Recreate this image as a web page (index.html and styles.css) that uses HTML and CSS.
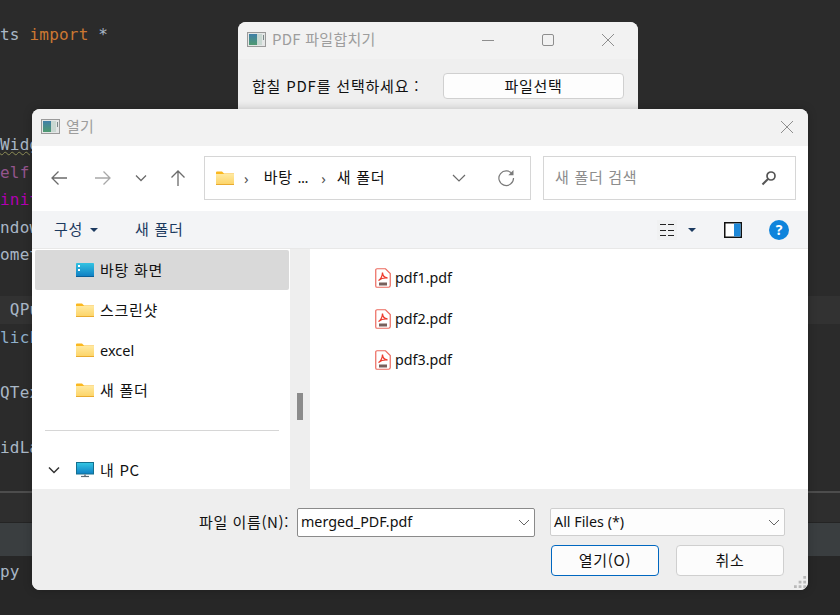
FILE: index.html
```html
<!DOCTYPE html>
<html lang="ko">
<head>
<meta charset="utf-8">
<title>열기</title>
<link rel="stylesheet" href="styles.css">
</head>
<body>
<div class="ide">
  <div class="code">
    <div class="ln">ts <span class="kw">import</span> *</div>
    <div class="ln"></div><div class="ln"></div><div class="ln"></div>
    <div class="ln"><span class="warn">Widget</span></div>
    <div class="ln"><span class="self">elf</span></div>
    <div class="ln"><span class="magic">init</span></div>
    <div class="ln">ndow</div>
    <div class="ln">omet</div>
    <div class="ln"></div>
    <div class="ln hl">&nbsp;QPu</div>
    <div class="ln"><span class="fn">lick</span></div>
    <div class="ln"></div>
    <div class="ln">QTex</div>
    <div class="ln"></div>
    <div class="ln">idLa</div>
  </div>
  <div class="panel">
    <div class="tab-strip"></div>
    <div class="tab-active"></div>
    <div class="ln py">py</div>
  </div>
</div>

<section class="win main-win">
  <header class="titlebar">
    <svg class="appicon" viewBox="0 0 19 15"><use href="#app"/></svg>
    <span class="title ko">PDF 파일합치기</span>
    <div class="caps">
      <svg viewBox="0 0 14 14" class="cap"><path d="M1 7.500h12" stroke="#8e8e8e" fill="none"/></svg>
      <svg viewBox="0 0 14 14" class="cap"><rect x="1.500" y="1.500" width="11" height="11" rx="1.500" stroke="#8e8e8e" fill="none"/></svg>
      <svg viewBox="0 0 14 14" class="cap"><path d="M1 1l12 12M13 1L1 13" stroke="#8e8e8e" fill="none"/></svg>
    </div>
  </header>
  <div class="pick-row">
    <span class="ko pick-label">합칠 PDF를 선택하세요 :</span>
    <button class="pick-btn ko">파일선택</button>
  </div>
</section>

<section class="win dialog">
  <header class="titlebar">
    <svg class="appicon" viewBox="0 0 19 15"><use href="#app"/></svg>
    <span class="title ko">열기</span>
    <svg viewBox="0 0 14 14" class="dlg-close"><path d="M1 1l12 12M13 1L1 13" stroke="#8e8e8e" fill="none"/></svg>
  </header>

  <nav class="navbar">
    <div class="navbtns">
      <svg viewBox="0 0 18 18" class="nb" ><path d="M17 9H2M8.500 2.500L2 9l6.500 6.500" stroke="#6b6b6b" stroke-width="1.300" fill="none"/></svg>
      <svg viewBox="0 0 18 18" class="nb"><path d="M1 9h15M9.500 2.500L16 9l-6.500 6.500" stroke="#a8a8a8" stroke-width="1.300" fill="none"/></svg>
      <svg viewBox="0 0 12 8" class="nb-small"><path d="M1 1.500l5 5 5-5" stroke="#6b6b6b" stroke-width="1.300" fill="none"/></svg>
      <svg viewBox="0 0 18 18" class="nb"><path d="M9 17V2M2.500 8.500L9 2l6.500 6.500" stroke="#6b6b6b" stroke-width="1.300" fill="none"/></svg>
    </div>
    <div class="address">
      <svg class="fold" viewBox="0 0 18 14"><use href="#folder"/></svg>
      <span class="sep">›</span>
      <span class="ko crumb">바탕 <span class="dots">...</span></span>
      <span class="sep">›</span>
      <span class="ko crumb">새 폴더</span>
      <span class="spacer"></span>
      <svg viewBox="0 0 14 8" class="addr-chev"><path d="M1 1l6 6 6-6" stroke="#6b6b6b" stroke-width="1.200" fill="none"/></svg>
      <svg viewBox="0 0 18 18" class="refresh"><path d="M15.500 5.500A7.300 7.300 0 1 0 16.500 9" stroke="#7a7a7a" stroke-width="1.200" fill="none"/><path d="M16.500 1v5.200h-5.200z" fill="#7a7a7a"/></svg>
    </div>
    <div class="search">
      <span class="ko search-text">새 폴더 검색</span>
      <svg viewBox="0 0 16 16" class="mag"><circle cx="10" cy="6" r="4" stroke="#555" stroke-width="1.700" fill="none"/><path d="M7 9l-5.500 5.500" stroke="#555" stroke-width="2" fill="none"/></svg>
    </div>
  </nav>

  <div class="toolbar">
    <span class="ko tool org">구성</span>
    <span class="tri"></span>
    <span class="ko tool newf">새 폴더</span>
    <span class="spacer"></span>
    <svg viewBox="0 0 20 20" class="view"><rect width="20" height="20" fill="#f0f1f2"/><path d="M3 4.500h6M11 4.500h6M3 10.500h6M11 10.500h6M3 15.500h6M11 15.500h6" stroke="#222" stroke-width="1"/></svg>
    <span class="tri viewtri"></span>
    <svg viewBox="0 0 18 16" class="pane"><rect x=".75" y=".75" width="16.500" height="14.500" fill="#fff" stroke="#111" stroke-width="1.500"/><rect x="10" y="1.500" width="6.500" height="13" fill="#1e88d8"/></svg>
    <span class="help">?</span>
  </div>

  <div class="content">
    <aside class="side">
      <div class="row sel"><svg class="ic" viewBox="0 0 18 14"><use href="#desk"/></svg><span class="ko">바탕 화면</span></div>
      <div class="row"><svg class="ic" viewBox="0 0 18 14"><use href="#folder"/></svg><span class="ko">스크린샷</span></div>
      <div class="row"><svg class="ic" viewBox="0 0 18 14"><use href="#folder"/></svg><span class="lat">excel</span></div>
      <div class="row"><svg class="ic" viewBox="0 0 18 14"><use href="#folder"/></svg><span class="ko">새 폴더</span></div>
      <div class="divider"></div>
      <div class="row pc">
        <svg class="pc-chev" viewBox="0 0 12 8"><path d="M1 1.500l5 5 5-5" stroke="#333" stroke-width="1.500" fill="none"/></svg>
        <svg class="ic tall" viewBox="0 0 18 16"><defs><linearGradient id="m" x1="0" y1="0" x2="0" y2="1"><stop offset="0" stop-color="#35c8e4"/><stop offset="1" stop-color="#0f7fc4"/></linearGradient></defs><rect x=".5" y=".5" width="17" height="11.500" fill="url(#m)" stroke="#14708f"/><path d="M8 12h2v2H8z" fill="#8a9aa5"/><path d="M5 14.500h8" stroke="#5d6b75" stroke-width="1.200"/></svg>
        <span class="ko">내 PC</span>
      </div>
    </aside>
    <div class="scroll"><div class="thumb"></div></div>
    <div class="files">
      <div class="file"><svg class="pdf" viewBox="0 0 16 20"><use href="#pdf"/></svg><span class="lat">pdf1.pdf</span></div>
      <div class="file"><svg class="pdf" viewBox="0 0 16 20"><use href="#pdf"/></svg><span class="lat">pdf2.pdf</span></div>
      <div class="file"><svg class="pdf" viewBox="0 0 16 20"><use href="#pdf"/></svg><span class="lat">pdf3.pdf</span></div>
    </div>
  </div>

  <footer class="foot">
    <div class="foot-row">
      <span class="ko foot-label">파일 이름(N):</span>
      <div class="combo name"><span class="lat up">merged_PDF.pdf</span><svg viewBox="0 0 12 7" class="cchev"><path d="M1 1l5 5 5-5" stroke="#666" fill="none"/></svg></div>
      <div class="combo filter"><span class="lat up">All Files (*)</span><svg viewBox="0 0 12 7" class="cchev"><path d="M1 1l5 5 5-5" stroke="#666" fill="none"/></svg></div>
    </div>
    <div class="foot-row actions">
      <button class="btn primary ko">열기(O)</button>
      <button class="btn ko">취소</button>
    </div>
    <svg class="grip" viewBox="0 0 14 14"><path d="M10 0h3v3h-3zM5 5h3v3H5zM10 5h3v3h-3zM0 10h3v3H0zM5 10h3v3H5zM10 10h3v3h-3z" fill="#b9b9b9"/></svg>
  </footer>
</section>

<svg class="defs" aria-hidden="true">
  <defs>
    <linearGradient id="tl" x1="0" y1="0" x2="0" y2="1"><stop offset="0" stop-color="#3f7fa8"/><stop offset="1" stop-color="#4f9a70"/></linearGradient>
    <linearGradient id="ff" x1="0" y1="0" x2="0" y2="1"><stop offset="0" stop-color="#ffe9a0"/><stop offset="1" stop-color="#fdd467"/></linearGradient>
    <linearGradient id="dk" x1="0" y1="0" x2="0" y2="1"><stop offset="0" stop-color="#33c3e2"/><stop offset="1" stop-color="#0e7cc2"/></linearGradient>
    <symbol id="app" viewBox="0 0 19 15">
      <rect x=".5" y=".5" width="18" height="14" fill="#e4e6e6" stroke="#9a9a9a"/>
      <rect x="2" y="2" width="8" height="11" fill="url(#tl)"/>
      <rect x="10" y="2" width="5" height="11" fill="#c9d8d2"/>
      <rect x="16" y="3" width="1" height="5" fill="#7a8a88"/>
    </symbol>
    <symbol id="folder" viewBox="0 0 18 14">
      <path d="M0 1.500Q0 .5 1 .5h5l2 2h10V14H0z" fill="#fbb81f"/>
      <rect y="3" width="18" height="10.500" fill="url(#ff)"/>
      <rect y="13" width="18" height="1" fill="#e9ab30"/>
    </symbol>
    <symbol id="desk" viewBox="0 0 18 14">
      <rect y="0" width="18" height="14" rx=".8" fill="url(#dk)"/>
      <rect x="2" y="2" width="2" height="2" fill="#fff"/><rect x="2" y="6" width="2" height="2" fill="#fff"/>
      <rect y="13" width="18" height="1" fill="#0a5f98"/>
    </symbol>
    <symbol id="pdf" viewBox="0 0 16 20">
      <path d="M2 .75h8.500l4.750 4.750V17.500a1.750 1.750 0 0 1-1.750 1.750H2A1.250 1.250 0 0 1 .75 18V2A1.250 1.250 0 0 1 2 .75z" fill="#fff" stroke="#ec6a5e" stroke-width="1.200"/>
      <path d="M3.500 12.500c2-1 4-4.500 4-8 0 3 2 5 5 5.500-3-.3-6.500.5-9 2.500z" fill="none" stroke="#ee3d2f" stroke-width="1.300"/>
      <rect x="4" y="14.500" width="8" height="3" fill="#77605c"/>
    </symbol>
  </defs>
</svg>
</body>
</html>
```
FILE: styles.css
```css
html, body { margin: 0; padding: 0; }
body {
  width: 840px;
  height: 615px;
  overflow: hidden;
  background: #2b2b2b;
  position: relative;
  font-family: "Noto Sans", "Noto Sans CJK KR", sans-serif;
  font-size: 15px;
  color: #111;
}
.defs { width: 0; height: 0; display: block; }

.ide { height: 615px; display: flex; flex-direction: column; }
.code {
  height: 491px;
  padding-top: 21px;
  box-sizing: border-box;
  overflow: hidden;
}
.ln {
  height: 27.500px;
  line-height: 27.500px;
  font-family: "DejaVu Sans Mono", monospace;
  font-size: 16px;
  letter-spacing: .2px;
  color: #a9b7c6;
  white-space: pre;
}
.kw { color: #cc7832; }
.warn { color: #a9b7c6; text-decoration: underline wavy #8d8d55 1px; }
.self { color: #94558d; }
.magic { color: #b200b2; }
.fn { color: #8fb0cc; }
.hl { background: #323232; }

.panel { flex: 1; border-top: 2px solid #4d4d4d; display: flex; flex-direction: column; background: #272727; }
.tab-strip { height: 29px; background: #2e2e2e; border-bottom: 1px solid #242424; }
.tab-active { height: 33px; background: #3a3e40; }
.py { padding-top: 2px; }

.win { position: absolute; background: #efefef; box-sizing: border-box; overflow: hidden; }
.main-win {
  left: 238px; top: 22px; width: 400px; height: 120px;
  border-radius: 8px 8px 0 0;
}
.dialog {
  left: 32px; top: 109px; width: 776px; height: 481px;
  border-radius: 8px;
  display: flex; flex-direction: column;
  box-shadow: 0 0 10px rgba(0,0,0,.22);
}
.titlebar {
  height: 37px;
  flex: none;
  background: #f2f2f2;
  display: flex;
  align-items: center;
  padding: 0 0 2px 9px;
  box-sizing: border-box;
}
.appicon { width: 19px; height: 15px; margin-right: 6px; }
.ko { font-family: "Noto Sans CJK KR", "Noto Sans", sans-serif; font-size: 15px; letter-spacing: .7px; padding-bottom: 2px; }
.title { color: #9d9d9d; letter-spacing: .25px; }
.caps { margin-left: auto; display: flex; gap: 46px; padding-right: 23px; }
.cap { width: 14px; height: 14px; display: block; }
.dlg-close { width: 14px; height: 14px; margin-left: auto; margin-right: 14px; }
.lat { font-family: "Noto Sans", sans-serif; }
.up { padding-bottom: 2px; }
.dots { font-family: "Noto Sans", sans-serif; letter-spacing: -.5px; }

.pick-row { display: flex; align-items: center; height: 34px; margin-top: 10px; padding: 0 14px; background: #efefef; }
.pick-label { color: #111; letter-spacing: .8px; }
.pick-btn {
  margin-left: auto; width: 181px; height: 26px; padding: 0 0 2px;
  background: #fdfdfd; border: 1px solid #d0d0d0; border-radius: 4px;
  color: #111;
}

.navbar { height: 65px; flex: none; background: #fff; display: flex; align-items: center; padding-bottom: 2px; box-sizing: border-box; }
.navbtns { display: flex; align-items: center; width: 172px; padding-left: 18px; box-sizing: border-box; }
.nb { width: 18px; height: 18px; display: block; }
.navbtns .nb:nth-child(2) { margin-left: 26px; }
.nb-small { width: 12px; height: 8px; margin-left: 23px; }
.navbtns .nb:nth-child(4) { margin-left: 22px; }
.address {
  width: 327px; height: 44px; box-sizing: border-box;
  border: 1px solid #d6d6d6; display: flex; align-items: center;
  padding: 0 15px 0 11px;
}
.fold { width: 18px; height: 14px; }
.sep { margin: 0 15px 0 10px; color: #555; font-size: 15px; }
.crumb { color: #111; }
.crumb + .sep { margin: 0 11px 0 13px; }
.spacer { flex: 1; }
.addr-chev { width: 14px; height: 8px; margin-right: 31px; }
.refresh { width: 18px; height: 18px; }
.search {
  width: 253px; height: 44px; margin-left: 12px; box-sizing: border-box;
  border: 1px solid #d6d6d6; display: flex; align-items: center;
  padding: 0 18px 0 11px; justify-content: space-between;
}
.search-text { color: #8d8d8d; }
.mag { width: 16px; height: 16px; }

.toolbar { height: 38px; flex: none; background: #f3f4f6; border-bottom: 1px solid #e8e8e8; display: flex; align-items: center; box-sizing: border-box; padding-right: 19px; }
.tool { color: #1c3a60; }
.org { margin-left: 22px; }
.tri { width: 0; height: 0; border-left: 4px solid transparent; border-right: 4px solid transparent; border-top: 4px solid #1c3a60; margin-left: 7px; }
.newf { margin-left: 37px; }
.view { width: 20px; height: 20px; }
.viewtri { margin-left: 11px; margin-right: 28px; }
.pane { width: 18px; height: 16px; margin-right: 27px; }
.help {
  width: 20px; height: 20px; border-radius: 50%; background: #0f84dc;
  color: #fff; font: bold 14px/20px "Noto Sans", sans-serif; text-align: center;
}

.content { height: 240px; flex: none; display: flex; background: #fff; }
.side { width: 258px; flex: none; overflow: hidden; box-sizing: border-box; padding: 1px 1px 0 3px; }
.row { height: 40px; display: flex; align-items: center; padding-left: 41px; font-size: 14.500px; }
.sel { background: #d9d9d9; border-radius: 2px; }
.ic { width: 18px; height: 14px; margin-right: 6px; flex: none; }
.ic.tall { height: 16px; margin-right: 6px; }
.divider { height: 1px; background: #d6d6d6; margin: 20px 10px 19px 10px; }
.pc { padding-left: 13px; }
.pc-chev { width: 12px; height: 8px; margin-right: 16px; }
.scroll { width: 20px; flex: none; background: #eeeeee; position: relative; padding-top: 144px; box-sizing: border-box; }
.thumb { width: 6px; height: 27px; background: #8c8c8c; margin-left: 7px; }
.files { flex: 1; padding: 8px 0 0 63px; border-left: 2px solid #fff; }
.file { height: 41px; display: flex; align-items: center; font-size: 14.300px; }
.pdf { width: 16px; height: 20px; margin-right: 4px; }

.foot { flex: 1; background: #eeeeee; position: relative; padding-top: 19px; box-sizing: border-box; }
.foot-row { display: flex; align-items: center; }
.foot-label { margin-left: 166px; width: 91px; margin-right: 8px; white-space: nowrap; letter-spacing: .6px; text-align: right; }
.combo {
  height: 29px; box-sizing: border-box; background: #fff; display: flex; align-items: center;
  justify-content: space-between; padding: 0 4px 0 3px; border-radius: 2px; font-size: 14.300px;
}
.name { width: 238px; border: 1px solid #8a8a8a; }
.filter { width: 235px; margin-left: 15px; height: 28px; align-self: flex-start; border: 1px solid #cecece; background: #fdfdfd; }
.cchev { width: 12px; height: 7px; }
.actions { margin-top: 8px; justify-content: flex-end; gap: 17px; padding-right: 24px; }
.btn {
  width: 108px; height: 31px; padding: 0 0 2px; background: #fcfcfc;
  border: 1px solid #cfcfcf; border-radius: 4px; color: #111;
}
.primary { border-color: #0067c0; }
.grip { position: absolute; right: 1px; bottom: 1px; width: 13px; height: 13px; }
```
